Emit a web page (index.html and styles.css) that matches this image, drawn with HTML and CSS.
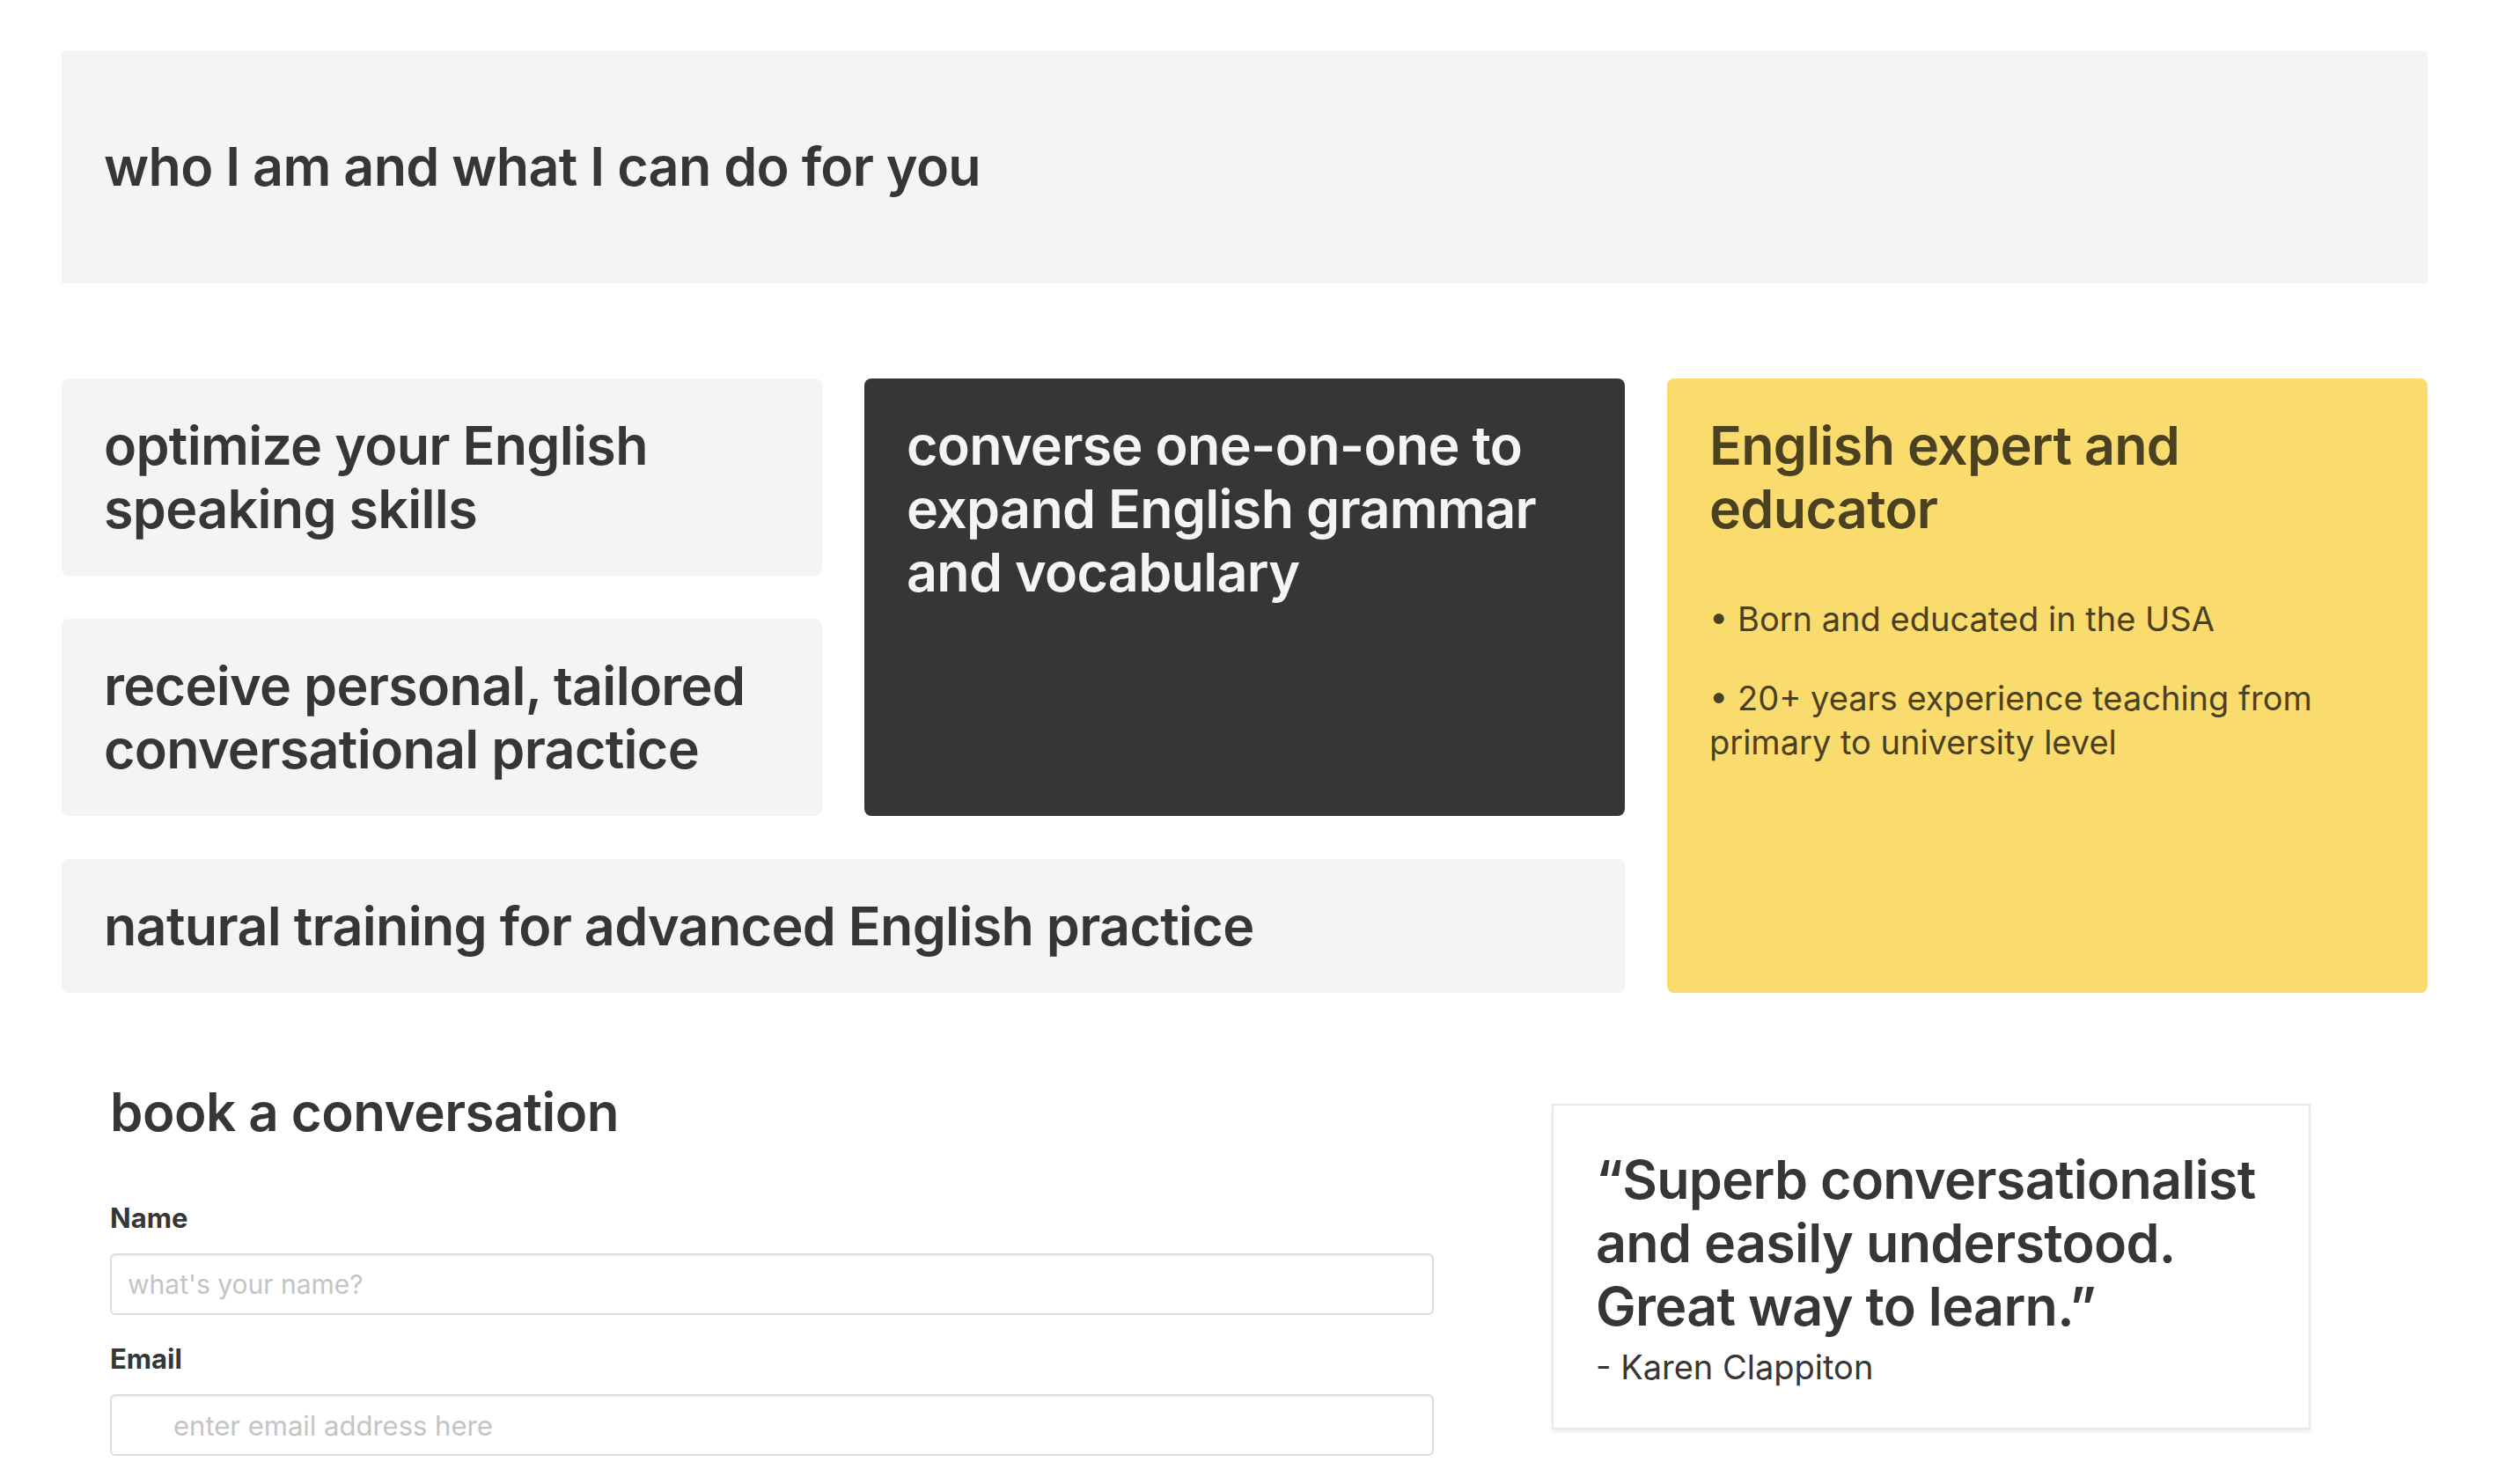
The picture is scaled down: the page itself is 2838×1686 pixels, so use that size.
FILE: index.html
```html
<!DOCTYPE html>
<html lang="en">
<head>
<meta charset="utf-8">
<title>who I am and what I can do for you</title>
<link rel="stylesheet" href="styles.css">
</head>
<body>
<main class="page">
  <header class="banner">
    <h1 class="banner-title">who I am and what I can do for you</h1>
  </header>

  <section class="features">
    <div class="card card-light card-a"><p class="card-text">optimize your English speaking skills</p></div>
    <div class="card card-dark card-b"><p class="card-text">converse one-on-one to expand English grammar and vocabulary</p></div>
    <div class="card card-yellow card-c">
      <h2 class="card-text">English expert and educator</h2>
      <p class="bullet">• Born and educated in the USA</p>
      <p class="bullet">• 20+ years experience teaching from primary to university level</p>
    </div>
    <div class="card card-light card-d"><p class="card-text">receive personal, tailored conversational practice</p></div>
    <div class="card card-light card-e"><p class="card-text">natural training for advanced English practice</p></div>
  </section>

  <section class="bottom">
    <form class="booking">
      <h2 class="booking-title">book a conversation</h2>
      <label class="field-label" for="name">Name</label>
      <input class="field" id="name" type="text" placeholder="what's your name?">
      <label class="field-label" for="email">Email</label>
      <input class="field field-email" id="email" type="email" placeholder="enter email address here">
    </form>
    <blockquote class="quote">
      <p class="quote-text">“Superb conversationalist and easily understood. Great way to learn.”</p>
      <p class="quote-author">- Karen Clappiton</p>
    </blockquote>
  </section>
</main>
</body>
</html>
```

FILE: styles.css
```css
* { box-sizing: border-box; }

html, body {
  margin: 0;
  padding: 0;
  background: #ffffff;
}

body {
  font-family: Inter, "Noto Sans", "Liberation Sans", sans-serif;
  color: #363636;
}

.page {
  width: 2688px;
  margin-left: 70px;
  padding-top: 58px;
  padding-bottom: 40px;
}

.banner {
  background: #f4f4f4;
  height: 264px;
  display: flex;
  align-items: center;
  padding: 0 48px;
}

.banner-title {
  margin: 0;
  font-size: 61px;
  font-weight: 600;
  line-height: 1.2;
  letter-spacing: -0.7px;
  color: #363636;
}

.features {
  margin-top: 108px;
  display: grid;
  grid-template-columns: repeat(3, 864px);
  column-gap: 48px;
  row-gap: 49px;
}

.card {
  border-radius: 8px;
  padding: 40px 48px;
}

.card-light { background: #f4f4f4; color: #363636; }
.card-dark { background: #363636; color: #f4f4f4; }
.card-yellow { background: #fadb6e; color: #4a4120; }

.card-a { grid-column: 1; grid-row: 1; }
.card-b { grid-column: 2; grid-row: 1 / span 2; }
.card-c { grid-column: 3; grid-row: 1 / span 3; }
.card-d { grid-column: 1; grid-row: 2; }
.card-e { grid-column: 1 / span 2; grid-row: 3; }

.card-text {
  margin: 0;
  font-size: 61px;
  font-weight: 600;
  line-height: 72px;
  letter-spacing: -0.7px;
}

.bullet {
  margin: 40px 0 0;
  font-size: 38px;
  font-weight: 400;
  line-height: 50px;
}

.card-c .card-text + .bullet { margin-top: 64px; }

.bottom {
  margin-top: 100px;
  padding-left: 55px;
  display: grid;
  grid-template-columns: 1504px 862px;
  column-gap: 134px;
  align-items: start;
}

.booking {
  display: flex;
  flex-direction: column;
}

.booking-title {
  margin: -1px 0 67px;
  font-size: 60px;
  font-weight: 600;
  line-height: 1.2;
  letter-spacing: -0.5px;
  color: #363636;
}

.field-label {
  font-size: 31px;
  font-weight: 700;
  line-height: 36px;
  color: #363636;
  margin-bottom: 22px;
}

.field {
  width: 100%;
  height: 70px;
  border: 2px solid #dcdcdc;
  border-radius: 6px;
  box-shadow: inset 0 2px 2px rgba(0, 0, 0, 0.04);
  padding: 0 18px;
  font-family: Inter, "Noto Sans", "Liberation Sans", sans-serif;
  font-size: 30px;
  color: #363636;
  background: #ffffff;
  margin-bottom: 32px;
}

.field::placeholder { color: #c4c4c4; }

.field-email { padding-left: 70px; font-size: 31px; }

.quote {
  margin: 26px 0 0;
  border: 2px solid #e8e8e8;
  box-shadow: 0 3px 4px rgba(0, 0, 0, 0.08);
  padding: 48px 48px 44px;
  background: #ffffff;
}

.quote-text {
  margin: 0;
  font-size: 61px;
  font-weight: 600;
  line-height: 72px;
  letter-spacing: -0.7px;
  color: #363636;
}

.quote-author {
  margin: 8px 0 0;
  font-size: 38px;
  line-height: 50px;
  font-weight: 400;
  color: #363636;
}
```
